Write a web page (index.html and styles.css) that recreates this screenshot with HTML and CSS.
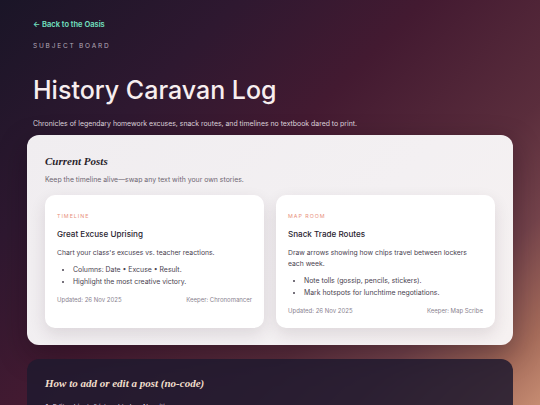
FILE: index.html
```html
<!DOCTYPE html>
<html lang="en">
<head>
<meta charset="utf-8">
<title>History Caravan Log</title>
<link rel="stylesheet" href="styles.css">
</head>
<body>
<div class="page">
  <header class="hero">
    <a class="back" href="#">← Back to the Oasis</a>
    <p class="eyebrow">SUBJECT BOARD</p>
    <h1 class="title">History Caravan Log</h1>
    <p class="lede">Chronicles of legendary homework excuses, snack routes, and timelines no textbook dared to print.</p>
  </header>

  <section class="panel light">
    <h2 class="panel-title">Current Posts</h2>
    <p class="panel-sub">Keep the timeline alive—swap any text with your own stories.</p>
    <div class="cards">
      <article class="card">
        <p class="tag">TIMELINE</p>
        <h3 class="card-title">Great Excuse Uprising</h3>
        <p class="card-text">Chart your class's excuses vs. teacher reactions.</p>
        <ul class="card-list">
          <li>Columns: Date • Excuse • Result.</li>
          <li>Highlight the most creative victory.</li>
        </ul>
        <div class="card-foot"><span>Updated: 26 Nov 2025</span><span>Keeper: Chronomancer</span></div>
      </article>
      <article class="card">
        <p class="tag">MAP ROOM</p>
        <h3 class="card-title">Snack Trade Routes</h3>
        <p class="card-text">Draw arrows showing how chips travel between lockers each week.</p>
        <ul class="card-list">
          <li>Note tolls (gossip, pencils, stickers).</li>
          <li>Mark hotspots for lunchtime negotiations.</li>
        </ul>
        <div class="card-foot"><span>Updated: 26 Nov 2025</span><span>Keeper: Map Scribe</span></div>
      </article>
    </div>
  </section>

  <section class="panel dark">
    <h2 class="panel-title">How to add or edit a post (no-code)</h2>
    <ol class="steps">
      <li>Edit subjects/history.html on Neocities.</li>
      <li>Copy a card block and change the text.</li>
    </ol>
  </section>
</div>
</body>
</html>
```

FILE: styles.css
```css
html, body {
  margin: 0;
  padding: 0;
}
body {
  font-family: Inter, "Noto Sans", sans-serif;
  background: linear-gradient(135deg, #1a1527 0%, #2e1830 25%, #431a31 45%, #5a2d3c 68%, #74434b 80%, #a56b5a 92%, #c68c72 100%);
  background-attachment: fixed;
  min-height: 100vh;
}
.page {
  padding: 20px 27px 40px;
}
.hero {
  padding: 0 6px;
}
.back {
  display: block;
  color: #74e2c2;
  font-size: 7.5px;
  font-weight: 600;
  text-decoration: none;
  line-height: 10px;
}
.eyebrow {
  margin: 11px 0 0;
  color: #b4aab8;
  font-size: 6.5px;
  letter-spacing: 1.8px;
  line-height: 10px;
}
.title {
  margin: 19px 0 0;
  color: #f7eeef;
  font-size: 25px;
  font-weight: 500;
  letter-spacing: 0;
  line-height: 40px;
}
.lede {
  margin: 8px 0 0;
  color: #dcd1da;
  font-size: 6.9px;
  line-height: 12px;
}
.panel {
  border-radius: 12px;
  padding: 18px 18px 17px;
}
.light {
  margin-top: 5px;
  background: linear-gradient(135deg, #f0edf0 0%, #f3f0f2 60%, #f6f1f1 100%);
  box-shadow: 0 10px 28px rgba(20, 8, 20, 0.35);
}
.panel-title {
  margin: 0;
  font-family: "Liberation Serif", "DejaVu Serif", serif;
  font-style: italic;
  font-weight: 700;
  font-size: 11px;
  line-height: 16px;
  color: #2a1f2c;
}
.panel-sub {
  margin: 6px 0 0;
  color: #6e6672;
  font-size: 6.9px;
  line-height: 10px;
}
.cards {
  margin-top: 10px;
  display: grid;
  grid-template-columns: 1fr 1fr;
  gap: 12px;
}
.card {
  background: #fff;
  border-radius: 10px;
  padding: 17px 12px 12px;
  box-shadow: 0 6px 16px rgba(60, 30, 50, 0.12);
  color: #4a4350;
}
.tag {
  margin: 0;
  color: #e8907c;
  font-size: 5.3px;
  letter-spacing: 1px;
  line-height: 9px;
}
.card-title {
  margin: 7px 0 0;
  color: #2a2430;
  font-size: 8.1px;
  font-weight: 500;
  line-height: 12px;
}
.card-text {
  margin: 7px 0 0;
  font-size: 6.8px;
  line-height: 11px;
}
.card-list {
  margin: 6px 0 0;
  padding-left: 16px;
  font-size: 6.9px;
  line-height: 11.5px;
}
.card-foot {
  margin-top: 8px;
  display: flex;
  justify-content: space-between;
  color: #8a8390;
  font-size: 6px;
  line-height: 10px;
}
.dark {
  margin-top: 14px;
  background: rgba(32, 26, 46, 0.86);
  padding-top: 16px;
}
.dark .panel-title {
  color: #f1dfcc;
}
.steps {
  margin: 10px 0 0;
  padding-left: 0;
  list-style-position: inside;
  color: #e7dde6;
  font-size: 6.6px;
  line-height: 12px;
}
```
